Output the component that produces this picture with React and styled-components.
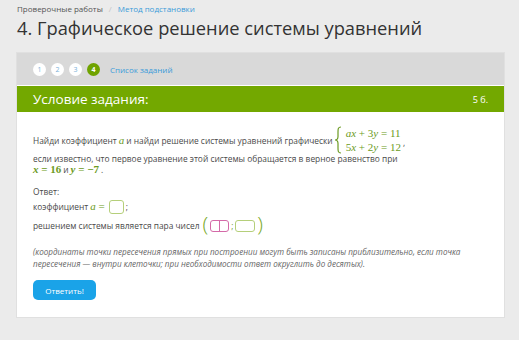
import React from 'react';
import styled, { createGlobalStyle } from 'styled-components';

const Global = createGlobalStyle`
  html, body {
    margin: 0;
    padding: 0;
    background: #ebebeb;
    font-family: "Open Sans", "DejaVu Sans", sans-serif;
  }
`;

const Page = styled.div`
  width: 519px;
  height: 340px;
  padding: 3px 15px 0 17px;
  box-sizing: border-box;
  overflow: hidden;
`;

const Crumbs = styled.div`
  font-size: 8px;
  color: #555;
  display: flex;
  gap: 6px;
  line-height: 12px;
  a {
    color: #3a9bd9;
    text-decoration: none;
  }
  span.sep {
    color: #c4c4c4;
  }
`;

const Title = styled.h1`
  margin: 0;
  font-weight: 400;
  font-size: 18.3px;
  line-height: 26px;
  color: #333;
`;

const Card = styled.div`
  margin-top: 12px;
  width: 487px;
  background: #fff;
  box-shadow: 0 0 0 1px #e0e0e0;
`;

const Tabs = styled.div`
  background: #d9d9d9;
  height: 32px;
  display: flex;
  align-items: center;
  padding-left: 16px;
  gap: 5px;
  box-sizing: border-box;
`;

const Num = styled.span`
  width: 13px;
  height: 13px;
  border-radius: 50%;
  background: ${p => (p.active ? '#6fa300' : '#fff')};
  color: ${p => (p.active ? '#fff' : '#7ab0d8')};
  font-size: 7px;
  font-weight: ${p => (p.active ? 700 : 400)};
  display: flex;
  align-items: center;
  justify-content: center;
`;

const TaskList = styled.a`
  margin-left: 5px;
  font-size: 8px;
  color: #3a9bd9;
  text-decoration: none;
`;

const Header = styled.div`
  background: #73a800;
  height: 26px;
  display: flex;
  align-items: center;
  justify-content: space-between;
  padding: 0 16px;
  color: #fff;
  margin-top: 1px;
`;

const HeadTitle = styled.span`
  font-size: 13.5px;
`;

const Points = styled.span`
  font-size: 9px;
`;

const Body = styled.div`
  padding: 15px 16px 17px;
  font-size: 8.4px;
  color: #4a4a4a;
  line-height: 11px;
`;

const Line = styled.div`
  display: flex;
  align-items: center;
  height: ${p => p.h || 11}px;
  margin-top: ${p => p.mt || 0}px;
  gap: ${p => p.gap || 0}px;
`;

const M = styled.span`
  font-family: "Liberation Serif", "DejaVu Serif", serif;
  color: #6b9a22;
  font-size: 11px;
  font-weight: ${p => (p.b ? 700 : 400)};
  margin: 0 2px;
  white-space: nowrap;
  i {
    font-style: italic;
  }
`;

const System = styled.span`
  display: inline-flex;
  align-items: center;
  margin-left: 1px;
`;

const Eqs = styled.span`
  display: flex;
  flex-direction: column;
  line-height: 14px;
`;

const Para = styled.div`
  margin-top: ${p => p.mt || 0}px;
`;

const Box = styled.span`
  display: inline-block;
  width: ${p => p.w || 15}px;
  height: ${p => p.h || 13}px;
  border: 1px solid ${p => p.c || '#b5cf7a'};
  border-radius: 3px;
  box-sizing: border-box;
  background: #fff;
  margin: 0 2px;
`;

const Pair = styled.span`
  display: inline-flex;
  align-items: center;
  margin-left: 3px;
  color: #6b9a22;
`;

const Paren = styled.span`
  font-size: 21px;
  font-weight: 300;
  line-height: 1;
  color: #7aaa2a;
  margin-top: -2px;
`;

const Split = styled.span`
  display: inline-flex;
  width: 19px;
  height: 12px;
  border: 1px solid #d46aa8;
  border-radius: 3px;
  box-sizing: border-box;
  margin: 0 2px;
  &::after {
    content: '';
    width: 1px;
    background: #d46aa8;
    margin-left: 8px;
  }
`;

const Note = styled.div`
  margin-top: 12px;
  font-size: 8.1px;
  font-style: italic;
  color: #666;
  line-height: 11.5px;
`;

const Button = styled.button`
  margin-top: 11px;
  background: #1aa3e8;
  color: #fff;
  border: none;
  border-radius: 5px;
  font-family: "Open Sans", sans-serif;
  font-size: 8px;
  width: 63px;
  height: 20px;
  padding: 0;
  display: block;
`;

function Brace() {
  return (
    <svg width="8" height="28" viewBox="0 0 8 28" style={{ marginRight: 2 }}>
      <path
        d="M7 1 C4 1 4 3 4 6 L4 10.5 C4 13 3 14 1 14 C3 14 4 15 4 17.5 L4 22 C4 25 4 27 7 27"
        fill="none"
        stroke="#6b9a22"
        strokeWidth="1.2"
      />
    </svg>
  );
}

export default function App() {
  return (
    <Page>
      <Global />
      <Crumbs>
        <span>Проверочные работы</span>
        <span className="sep">/</span>
        <a href="#">Метод подстановки</a>
      </Crumbs>
      <Title>4. Графическое решение системы уравнений</Title>
      <Card>
        <Tabs>
          <Num>1</Num>
          <Num>2</Num>
          <Num>3</Num>
          <Num active>4</Num>
          <TaskList href="#">Список заданий</TaskList>
        </Tabs>
        <Header>
          <HeadTitle>Условие задания:</HeadTitle>
          <Points>5 б.</Points>
        </Header>
        <Body>
          <Line h={26}>
            <span>Найди коэффициент</span>
            <M><i>a</i></M>
            <span>и найди решение системы уравнений графически</span>
            <System>
              <Brace />
              <Eqs>
                <M><i>ax</i> + 3<i>y</i> = 11</M>
                <M>5<i>x</i> + 2<i>y</i> = 12</M>
              </Eqs>
              <span style={{ alignSelf: 'flex-end', marginBottom: 6 }}>,</span>
            </System>
          </Line>
          <Para>если известно, что первое уравнение этой системы обращается в верное равенство при</Para>
          <Line>
            <M b style={{ marginLeft: 0 }}><i>x</i> = 16</M>
            <span>и</span>
            <M b><i>y</i> = −7</M>
            <span>.</span>
          </Line>
          <Para mt={11}>Ответ:</Para>
          <Line h={15} mt={2}>
            <span>коэффициент</span>
            <M><i>a</i> =</M>
            <Box w={15} h={14} />
            <span>;</span>
          </Line>
          <Line h={17} mt={3}>
            <span>решением системы является пара чисел</span>
            <Pair>
              <Paren>(</Paren>
              <Split />
              <span>;</span>
              <Box w={20} h={12} />
              <Paren>)</Paren>
            </Pair>
          </Line>
          <Note>
            (координаты точки пересечения прямых при построении могут быть записаны приблизительно, если точка
            пересечения — внутри клеточки; при необходимости ответ округлить до десятых).
          </Note>
          <Button>Ответить!</Button>
        </Body>
      </Card>
    </Page>
  );
}
